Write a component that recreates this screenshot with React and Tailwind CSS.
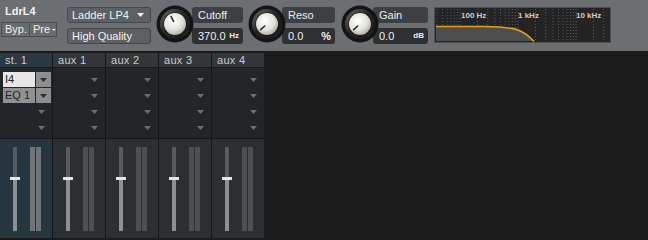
import React from "react";

const FONT = { fontFamily: '"Liberation Sans", Arial, sans-serif' };

// small dropdown triangle
const Tri = ({ color = "#6b6f72" }) => (
  <svg width="7" height="4" viewBox="0 0 7 4">
    <polygon points="0,0 7,0 3.5,4" fill={color} />
  </svg>
);

const Knob = ({ angle, id }) => {
  const rad = ((angle - 90) * Math.PI) / 180;
  const x1 = 19 + Math.cos(rad) * 3;
  const y1 = 19 + Math.sin(rad) * 3;
  const x2 = 19 + Math.cos(rad) * 8.5;
  const y2 = 19 + Math.sin(rad) * 8.5;
  return (
    <svg width="38" height="38" viewBox="0 0 38 38">
      <defs>
        <linearGradient id={`ring-${id}`} x1="0" y1="0" x2="1" y2="1">
          <stop offset="0" stopColor="#6a6a6a" />
          <stop offset="0.45" stopColor="#262626" />
          <stop offset="0.8" stopColor="#1c1c1c" />
          <stop offset="1" stopColor="#4a4a4a" />
        </linearGradient>
        <radialGradient id={`cap-${id}`} cx="0.4" cy="0.35" r="0.7">
          <stop offset="0" stopColor="#ffffff" />
          <stop offset="0.6" stopColor="#e4e4dc" />
          <stop offset="1" stopColor="#a9a9a2" />
        </radialGradient>
      </defs>
      <circle cx="19" cy="19" r="18.5" fill="#141414" />
      <circle cx="19" cy="19" r="15" fill={`url(#ring-${id})`} />
      <circle cx="19" cy="19" r="11.5" fill="#1a1a1a" />
      <circle cx="19" cy="19" r="11" fill={`url(#cap-${id})`} />
      <line x1={x1} y1={y1} x2={x2} y2={y2} stroke="#2a2a2a" strokeWidth="1.6" strokeLinecap="round" />
    </svg>
  );
};

const Param = ({ label, value, unit, angle, id, boxW, ml, boxMl }) => (
  <div className={`flex items-start ${ml}`}>
    <div className="mt-[5px] relative z-10">
      <Knob angle={angle} id={id} />
    </div>
    <div className={`flex flex-col gap-[5px] pt-[7px] ${boxMl}`} style={{ width: boxW }}>
      <div className="h-[16px] rounded-[3px] bg-[#3d4043] text-[11px] leading-[16px] text-[#eeeeee] pl-[6px]">
        {label}
      </div>
      <div className="h-[16px] rounded-[3px] bg-[#2e3032] text-[11px] leading-[16px] text-[#eeeeee] pl-[6px] pr-[4px] flex justify-between items-center">
        <span>{value}</span>
        <span className={unit === "%" ? "text-[11px] font-bold" : "text-[8px] font-bold"}>{unit}</span>
      </div>
    </div>
  </div>
);

const FilterGraph = () => {
  const lines = [];
  [-32, 26, 84, 142].forEach((d) => {
    for (let n = 1; n <= 9; n++) {
      const x = d + Math.log10(n) * 58;
      if (x > 1 && x < 176) lines.push(x);
    }
  });
  return (
    <svg width="177" height="36" viewBox="0 0 177 36">
      <rect x="0.5" y="0.5" width="176" height="35" fill="#242424" stroke="#4c4f52" />
      {lines.map((x, i) => (
        <line key={i} x1={x} y1="2" x2={x} y2="34" stroke="#5a5a5a" strokeWidth="1" strokeDasharray="1 2" />
      ))}
      <path
        d="M2 19.5 L50 19.5 C66 19.5 76 20.5 84 23 C92 26 96 30 100 34 L2 34 Z"
        fill="#4d4d4d"
      />
      <path
        d="M2 19.5 L50 19.5 C66 19.5 76 20.5 84 23 C92 26 96 30 100 34.5"
        fill="none"
        stroke="#e5a21a"
        strokeWidth="1.6"
      />
      <text x="27" y="11" fontSize="8" fill="#cfcfcf" fontWeight="bold" fontFamily="Liberation Sans, Arial, sans-serif">100 Hz</text>
      <text x="84" y="11" fontSize="8" fill="#cfcfcf" fontWeight="bold" fontFamily="Liberation Sans, Arial, sans-serif">1 kHz</text>
      <text x="142" y="11" fontSize="8" fill="#cfcfcf" fontWeight="bold" fontFamily="Liberation Sans, Arial, sans-serif">10 kHz</text>
    </svg>
  );
};

const columns = [
  { name: "st. 1", active: true, slots: ["I4", "EQ 1"] },
  { name: "aux 1", slots: [] },
  { name: "aux 2", slots: [] },
  { name: "aux 3", slots: [] },
  { name: "aux 4", slots: [] },
];

const Column = ({ col }) => (
  <div className="w-[52px] flex flex-col gap-px">
    {/* HEADER */}
    <div
      className={`h-[14px] text-[11px] leading-[14px] pl-[5px] tracking-[0.3px] text-[#c9cdd0] ${
        col.active ? "bg-[#2a3944]" : "bg-[#33373a]"
      }`}
    >
      {col.name}
    </div>

    {/* SLOTS */}
    <div className="h-[70px] bg-[#222629] pt-[4px] flex flex-col gap-px">
      {[0, 1, 2, 3].map((i) => {
        const slot = col.slots[i];
        if (slot) {
          return (
            <div key={i} className="h-[15px] flex pl-[3px] gap-px">
              <div
                className={`w-[32px] text-[11px] leading-[15px] pl-[2px] text-[#222] ${
                  i === 0 ? "bg-[#e6e6e6]" : "bg-[#8f9192]"
                }`}
              >
                {slot}
              </div>
              <div className="w-[15px] bg-[#8c8e8f] flex items-center justify-center">
                <Tri color="#2b2b2b" />
              </div>
            </div>
          );
        }
        return (
          <div key={i} className="h-[15px] flex items-center justify-end pr-[7px]">
            <Tri />
          </div>
        );
      })}
    </div>

    {/* FADER */}
    <div
      className={`h-[99px] flex pt-[8px] pl-[10px] ${
        col.active ? "bg-[#27353e]" : "bg-[#2c2f32]"
      }`}
    >
      <div className="w-[10px] flex flex-col items-center">
        <div className="w-[4px] h-[30px] bg-[#565b5e]" />
        <div className="w-[10px] h-[3px] bg-[#e6e6e6]" />
        <div className="w-[4px] h-[51px] bg-[#8c9092]" />
      </div>
      <div className="flex gap-px ml-[10px]">
        <div className={`w-[5px] h-[84px] ${col.active ? "bg-[#6e7477]" : "bg-[#4c5053]"}`} />
        <div className={`w-[5px] h-[84px] ${col.active ? "bg-[#6e7477]" : "bg-[#4c5053]"}`} />
      </div>
    </div>
  </div>
);

const App = () => {
  return (
    <div className="w-[648px] h-[240px] bg-[#1b1b1b] overflow-hidden" style={FONT}>
      {/* TOP STRIP */}
      <div className="h-[51px] bg-[#6b6f72] flex items-start">
        {/* TITLE + BUTTONS */}
        <div className="w-[64px] flex flex-col">
          <div className="pl-[5px] pt-[3px] h-[22px] text-[11px] font-bold text-[#f2f2f2]">LdrL4</div>
          <div className="flex pl-[1px]">
            <div className="w-[29px] h-[15px] border border-[#4a4d50] bg-[#686c6f] text-[11px] leading-[13px] text-[#f0f0f0] pl-[3px]">
              Byp.
            </div>
            <div className="w-[27px] h-[15px] border border-l-0 border-[#4a4d50] bg-[#686c6f] text-[11px] leading-[13px] text-[#f0f0f0] pl-[3px] flex items-center gap-[2px]">
              <span>Pre</span>
              <Tri color="#f0f0f0" />
            </div>
          </div>
        </div>

        {/* MODE DROPDOWNS */}
        <div className="ml-[3px] pt-[7px] flex flex-col gap-[5px]">
          <div className="w-[84px] h-[16px] rounded-[3px] border border-[#45484b] bg-[#5d6164] text-[11px] leading-[14px] text-[#f2f2f2] pl-[4px] pr-[6px] flex items-center justify-between">
            <span>Ladder LP4</span>
            <Tri color="#f0f0f0" />
          </div>
          <div className="w-[84px] h-[16px] rounded-[3px] border border-[#45484b] bg-[#5d6164] text-[11px] leading-[14px] text-[#f2f2f2] pl-[4px]">
            High Quality
          </div>
        </div>

        {/* KNOBS */}
        <Param label="Cutoff" value="370.0" unit="Hz" angle={-28} id="a" boxW={51} ml="ml-[5px]" boxMl="-ml-[2px]" />
        <Param label="Reso" value="0.0" unit="%" angle={-132} id="b" boxW={53} ml="ml-[5px]" boxMl="-ml-[4px]" />
        <Param label="Gain" value="0.0" unit="dB" angle={-132} id="c" boxW={55} ml="ml-[6px]" boxMl="-ml-[6px]" />

        {/* GRAPH */}
        <div className="ml-[6px] mt-[7px]">
          <FilterGraph />
        </div>
      </div>

      {/* MIXER */}
      <div className="pt-[2px] flex">
        <div className="flex gap-px bg-[#151718]">
          {columns.map((col) => (
            <Column key={col.name} col={col} />
          ))}
        </div>
      </div>
    </div>
  );
};

export default App;
